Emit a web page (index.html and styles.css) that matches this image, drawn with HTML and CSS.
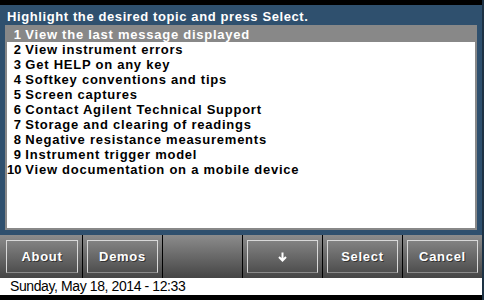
FILE: index.html
```html
<!DOCTYPE html>
<html>
<head>
<meta charset="utf-8">
<link rel="stylesheet" href="styles.css">
</head>
<body>
<div class="screen">
  <div class="topbar"></div>
  <div class="panel">
    <div class="title">Highlight the desired topic and press Select.</div>
    <div class="list">
      <div class="row sel"><span class="num">1</span> View the last message displayed</div>
      <div class="row"><span class="num">2</span> View instrument errors</div>
      <div class="row"><span class="num">3</span> Get HELP on any key</div>
      <div class="row"><span class="num">4</span> Softkey conventions and tips</div>
      <div class="row"><span class="num">5</span> Screen captures</div>
      <div class="row"><span class="num">6</span> Contact Agilent Technical Support</div>
      <div class="row"><span class="num">7</span> Storage and clearing of readings</div>
      <div class="row"><span class="num">8</span> Negative resistance measurements</div>
      <div class="row"><span class="num">9</span> Instrument trigger model</div>
      <div class="row"><span class="num">10</span> View documentation on a mobile device</div>
    </div>
  </div>
  <div class="softkeys">
    <div class="key"><div class="frame">About</div></div>
    <div class="key"><div class="frame">Demos</div></div>
    <div class="key"></div>
    <div class="key"><div class="frame"><svg class="arrow" width="9" height="10" viewBox="0 0 9 10"><path d="M4.5 0.5 V8.5 M1 5 L4.5 8.5 L8 5" fill="none" stroke="#fff" stroke-width="2"/></svg></div></div>
    <div class="key"><div class="frame">Select</div></div>
    <div class="key"><div class="frame">Cancel</div></div>
  </div>
  <div class="status">Sunday, May 18, 2014 - 12:33</div>
  <div class="bottombar"></div>
</div>
</body>
</html>
```

FILE: styles.css
```css
html, body {
  margin: 0;
  padding: 0;
  background: #000;
}
.screen {
  width: 482px;
  height: 300px;
  border-right: 2px solid #1d3244;
  display: flex;
  flex-direction: column;
  font-family: "Liberation Sans", Arial, sans-serif;
}
.topbar {
  height: 5px;
  background: #000;
}
.panel {
  height: 230px;
  box-sizing: border-box;
  background: #2f506e;
  padding: 0 5px 5px 5px;
  display: flex;
  flex-direction: column;
}
.title {
  height: 20px;
  box-sizing: border-box;
  padding: 3px 0 0 2px;
  line-height: 17px;
  font-size: 13px;
  font-weight: bold;
  color: #fff;
  letter-spacing: 0.6px;
  white-space: nowrap;
}
.list {
  flex: 1;
  background: #fff;
  border: 2px solid #888;
}
.row {
  height: 15px;
  line-height: 15px;
  font-size: 13px;
  font-weight: bold;
  color: #000;
  letter-spacing: 0.75px;
  white-space: nowrap;
}
.row.sel {
  background: #888;
  color: #fff;
}
.num {
  display: inline-block;
  width: 14px;
  text-align: right;
  letter-spacing: 0;
}
.softkeys {
  height: 43px;
  display: flex;
  padding-left: 2px;
  background: linear-gradient(#8c8c8c, #454545);
}
.key {
  width: 80px;
  box-sizing: border-box;
  padding: 5px 4px;
  display: flex;
}
.key + .key {
  border-left: 1px solid #000;
}
.frame {
  flex: 1;
  border: 1px solid #d8d8d8;
  border-bottom-color: #8a8a8a;
  display: flex;
  align-items: center;
  justify-content: center;
  color: #fff;
  font-size: 13px;
  font-weight: bold;
  letter-spacing: 0.7px;
  text-shadow: 1px 1px 0 #333;
}
.status {
  height: 17px;
  line-height: 17px;
  background: #fff;
  color: #000;
  font-size: 14px;
  letter-spacing: -0.4px;
  padding-left: 10px;
}
.bottombar {
  height: 5px;
  background: #000;
}
```
